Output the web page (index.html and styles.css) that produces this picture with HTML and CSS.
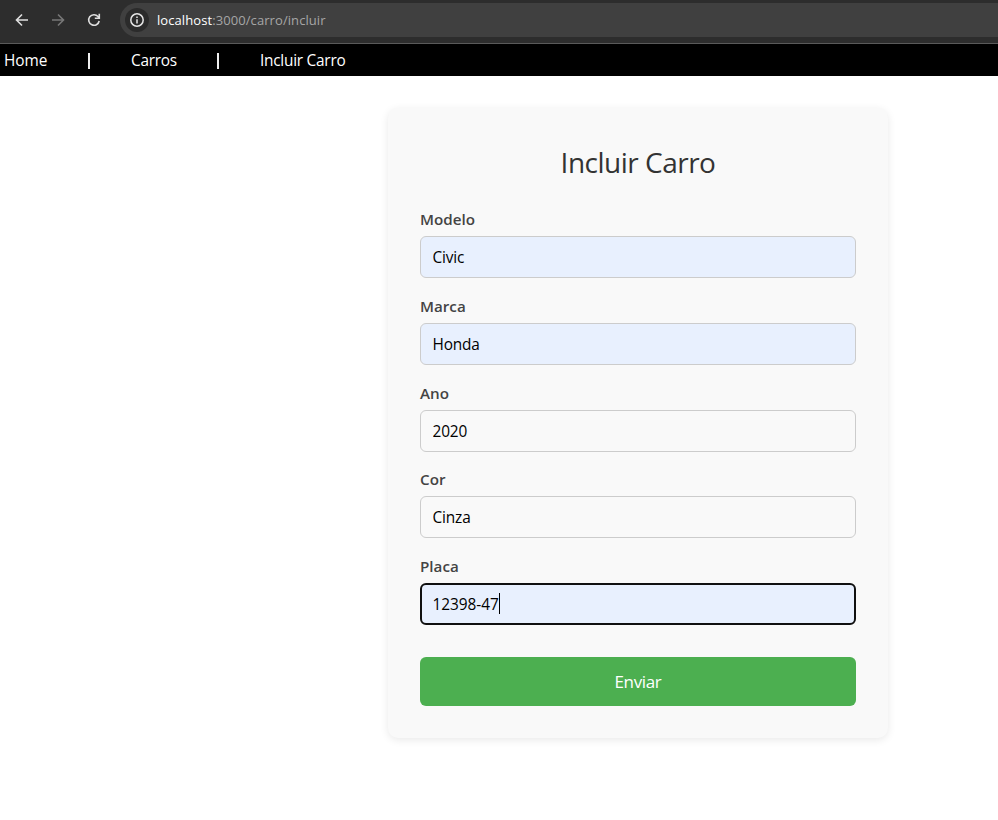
FILE: index.html
```html
<!DOCTYPE html>
<html lang="pt-BR">
<head>
<meta charset="utf-8">
<title>Incluir Carro</title>
<link rel="stylesheet" href="styles.css">
</head>
<body>
<header class="browser">
  <div class="tools">
    <svg class="icon" viewBox="0 0 16 16"><path d="M14 8H3M8 2.5L2.5 8L8 13.5"/></svg>
    <svg class="icon icon-off" viewBox="0 0 16 16"><path d="M2 8H13M8 2.5L13.5 8L8 13.5"/></svg>
    <svg class="icon" viewBox="0 0 16 16"><path d="M13.2 9A5.3 5.3 0 1 1 12 4.5L13.2 5.8M13.3 1.8V6.2H8.8"/></svg>
  </div>
  <div class="address">
    <span class="info"><svg class="info-icon" viewBox="0 0 16 16"><circle cx="8" cy="8" r="6.2"/><path d="M8 7.2V11.4M8 4.5V6.1"/></svg></span>
    <span class="url"><b class="host">localhost</b>:3000/carro/incluir</span>
  </div>
</header>
<nav class="nav">
  <a class="link home">Home</a><i class="bar"></i><a class="link carros">Carros</a><i class="bar"></i><a class="link">Incluir Carro</a>
</nav>
<main class="page">
  <form class="card">
    <h1 class="title">Incluir Carro</h1>
    <div class="field"><label class="label" for="modelo">Modelo</label><input class="input filled" id="modelo" value="Civic"></div>
    <div class="field"><label class="label" for="marca">Marca</label><input class="input filled" id="marca" value="Honda"></div>
    <div class="field"><label class="label" for="ano">Ano</label><input class="input" id="ano" value="2020"></div>
    <div class="field"><label class="label" for="cor">Cor</label><input class="input" id="cor" value="Cinza"></div>
    <div class="field"><label class="label" for="placa">Placa</label><input class="input filled active" id="placa" value="12398-47"><span class="caret"></span></div>
    <button class="submit" type="button">Enviar</button>
  </form>
</main>
</body>
</html>
```
FILE: styles.css
```css
* { box-sizing: border-box; }
body { margin: 0; background: #fff; font-family: "Open Sans", "Noto Sans", sans-serif; height: 820px; overflow: hidden; }
.browser { height: 44px; background: #2d2d2d; border-bottom: 1px solid #5a5a5a; display: flex; padding: 3px 0 6px 14px; }
.tools { display: flex; align-items: center; gap: 20px; width: 106px; }
.icon { width: 16px; height: 16px; fill: none; stroke: #dedede; stroke-width: 1.6; }
.icon-off { stroke: #777; }
.address { flex: 1; height: 34px; background: #404040; border-radius: 17px 0 0 17px; display: flex; align-items: center; padding-left: 5px; gap: 8px; }
.info { width: 24px; height: 24px; border-radius: 50%; background: #2b2b2b; display: flex; align-items: center; justify-content: center; }
.info-icon { width: 16px; height: 16px; fill: none; stroke: #e6e6e6; stroke-width: 1.5; }
.url { font-size: 13px; color: #a6a6a6; letter-spacing: 0.08px; line-height: 34px; }
.host { font-weight: 400; color: #fff; }
.nav { height: 32px; background: #000; display: flex; align-items: center; padding-left: 4px; color: #fff; }
.link { font-size: 15.4px; line-height: 32px; letter-spacing: -0.25px; padding-top: 2px; }
.home { width: 84px; letter-spacing: 0; }
.carros { width: 86px; }
.bar { width: 2px; height: 16px; background: #eee; margin-right: 41px; margin-top: 2px; }
.page { padding: 32px 0 0 388px; }
.card { width: 500px; height: 630px; background: #f9f9f9; border-radius: 10px; box-shadow: 0 2px 9px rgba(0,0,0,.09); padding: 32px; }
.title { margin: 0 0 22px; font-size: 28px; font-weight: 400; line-height: 44px; letter-spacing: -0.5px; text-align: center; color: #333; }
.field { position: relative; height: 86.75px; }
.label { display: block; height: 30px; line-height: 27px; font-size: 15.2px; font-weight: 600; color: #444; }
.input { display: block; width: 100%; height: 42px; border: 1px solid #ccc; border-radius: 6px; background: #f9f9f9; padding: 1px 11.5px 0; font: 15.4px "Open Sans", sans-serif; letter-spacing: -0.15px; color: #000; outline: 0; }
.filled { background: #e8f0fe; }
.active { border: 2px solid #101010; padding: 1px 10.5px 0; letter-spacing: -0.05px; }
.caret { position: absolute; left: 79px; top: 40px; width: 1px; height: 21px; background: #000; }
.submit { display: block; margin-top: 17px; width: 100%; height: 49px; border: 0; border-radius: 6px; background: #4caf50; color: #fff; font: 17px "Open Sans", sans-serif; letter-spacing: -0.35px; }
```
